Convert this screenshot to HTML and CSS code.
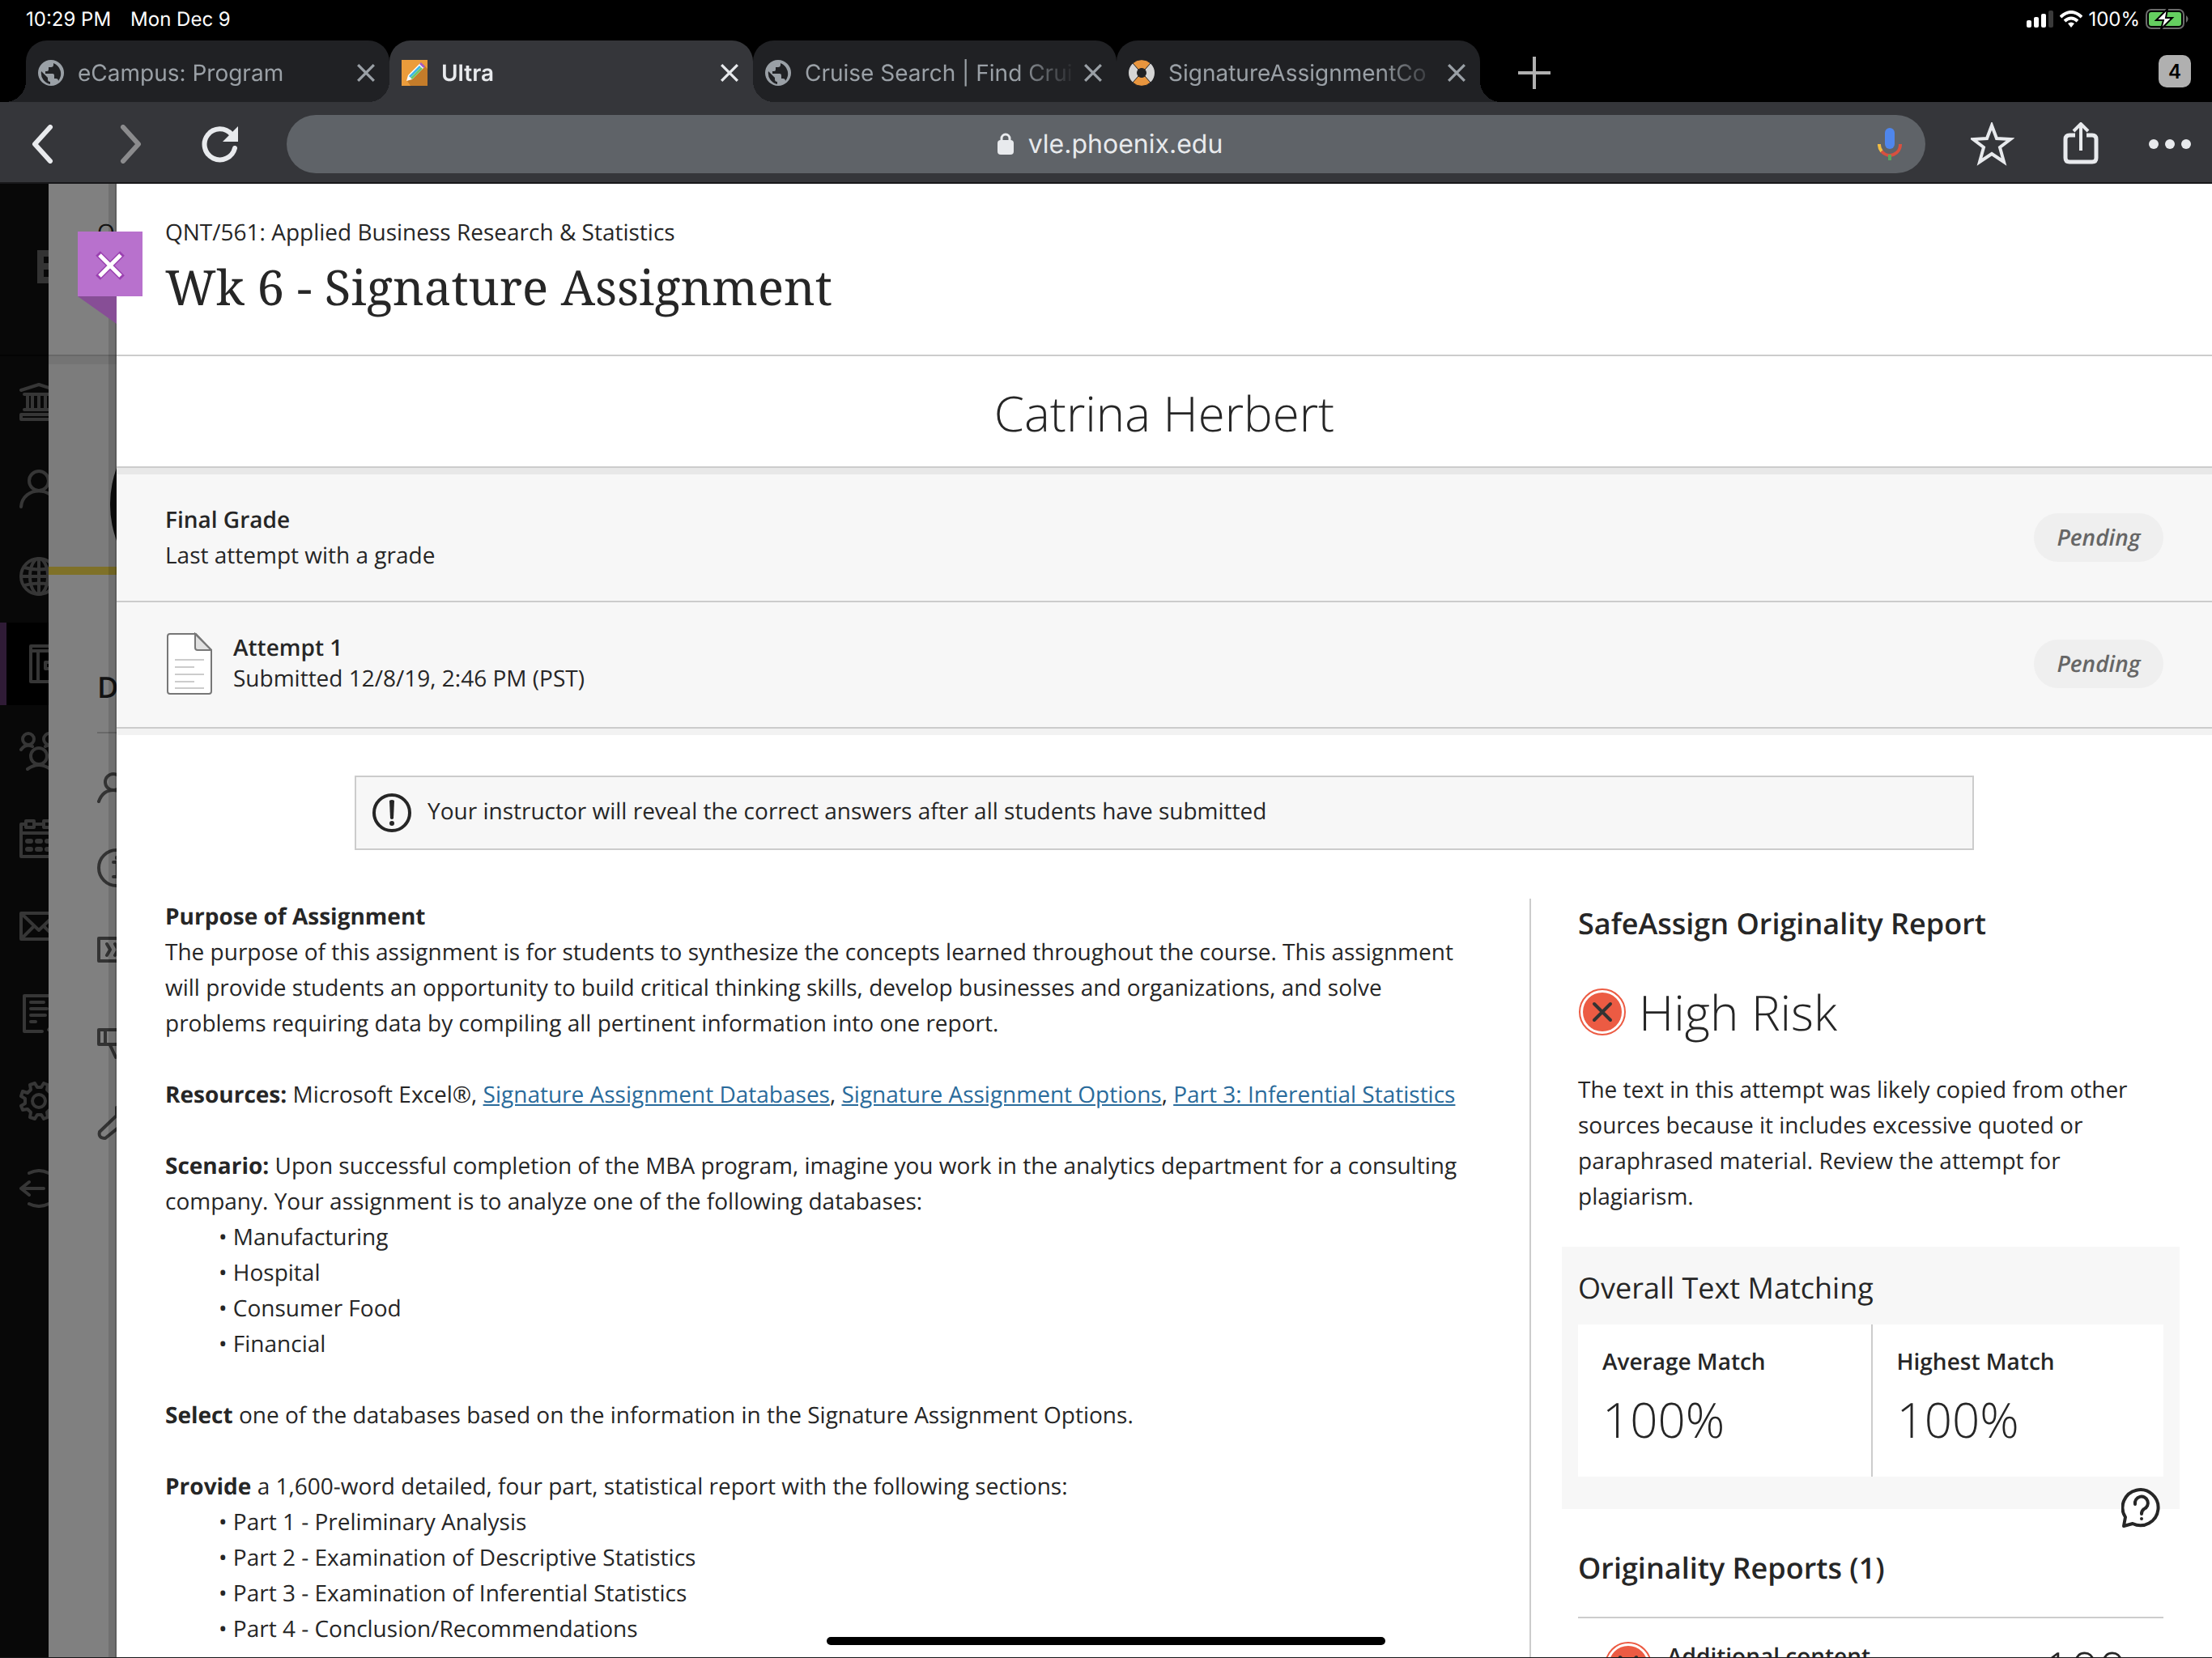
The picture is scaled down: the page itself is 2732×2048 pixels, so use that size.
FILE: index.html
```
<!DOCTYPE html>
<html lang="en">

<head>
    <meta charset="UTF-8">
    <meta name="viewport" content="width=device-width, initial-scale=1.0">
    <title>Ultra</title>
    <link rel="stylesheet" href="styles.css">
</head>

<body>
    <!-- shared shapes -->
    <svg class="defs" aria-hidden="true">
        <symbol id="globe" viewBox="0 0 32 32">
            <circle cx="16" cy="16" r="16" fill="#9aa0a6"/>
            <path d="M4 14 L12 22 V24 A3 3 0 0 0 15 27 V30 A14 14 0 0 1 4 14 Z M19 4 V6 A3 3 0 0 1 16 9 H13 V12 A2 2 0 0 1 11 14 H9 V17 H18 A2 2 0 0 1 20 19 V23 H22 A3 3 0 0 1 25 26 A14 14 0 0 0 19 4 Z" fill="#202124"/>
        </symbol>
        <symbol id="cross" viewBox="0 0 22 22">
            <path d="M2 2 L20 20 M20 2 L2 20" fill="none" stroke="currentColor" stroke-width="3"/>
        </symbol>
        <symbol id="risk" viewBox="0 0 60 60">
            <circle cx="30" cy="30" r="28" fill="#fff" stroke="#ec5b43" stroke-width="2"/>
            <circle cx="30" cy="30" r="24" fill="#ec5b43"/>
            <path d="M20 20 L40 40 M40 20 L20 40" stroke="#333" stroke-width="4" stroke-linecap="round"/>
        </symbol>
    </svg>

    <header class="browser">
        <div class="status">
            <span>10:29 PM</span>
            <span>Mon Dec 9</span>
            <div class="status-right">
                <svg width="34" height="22" viewBox="0 0 34 22" fill="#fff">
                    <rect x="0" y="12" width="6" height="9" rx="2"/>
                    <rect x="9" y="8" width="6" height="13" rx="2"/>
                    <rect x="18" y="4" width="6" height="17" rx="2"/>
                    <rect x="27" y="0" width="6" height="21" rx="2" fill="#3a3a3a"/>
                </svg>
                <svg width="28" height="22" viewBox="0 0 28 22" fill="none" stroke="#fff" stroke-width="4">
                    <path d="M1 8 Q14 -4 27 8"/>
                    <path d="M6 13 Q14 6 22 13"/>
                    <path d="M10 16 Q14 13 18 16 L14 21 Z" fill="#fff" stroke="none"/>
                </svg>
                <span>100%</span>
                <svg class="battery" width="54" height="26" viewBox="0 0 54 26">
                    <rect x="1" y="1" width="46" height="23" rx="6" fill="none" stroke="#6b6b6b" stroke-width="2"/>
                    <rect x="4" y="4" width="40" height="17" rx="3" fill="#65cf60"/>
                    <path d="M50 8 Q55 12 50 17 Z" fill="#6b6b6b"/>
                    <path d="M27 0 L13 14 H22 L19 25 L33 11 H25 Z" fill="#fff" stroke="#000" stroke-width="2"/>
                </svg>
            </div>
        </div>

        <div class="tabs">
            <div class="tab tab-first">
                <svg class="tab-icon"><use href="#globe"/></svg>
                <span class="tab-title">eCampus: Program</span>
                <button class="tab-close" type="button" aria-label="Close tab"><svg><use href="#cross"/></svg></button>
            </div>
            <div class="tab tab-active">
                <svg class="tab-icon" viewBox="0 0 32 32">
                    <rect width="32" height="32" fill="#eb9c3b"/>
                    <path d="M26 5 L32 11 V32 H11 L7 26 Z" fill="#c47c2a"/>
                    <path d="M6 26 L8 19 L23 4 L28 9 L13 24 Z" fill="#fff"/>
                    <path d="M9 20 L22 7 L24 9 L11 22 Z" fill="#3fb6e8"/>
                    <path d="M11 22 L24 9 L26 11 L13 24 Z" fill="#6cc56a"/>
                    <path d="M22 5 L24 3 L29 8 L27 10 Z" fill="#a25bc4"/>
                </svg>
                <span class="tab-title">Ultra</span>
                <button class="tab-close" type="button" aria-label="Close tab"><svg><use href="#cross"/></svg></button>
            </div>
            <div class="tab">
                <svg class="tab-icon"><use href="#globe"/></svg>
                <span class="tab-title">Cruise Search | Find Crui</span>
                <button class="tab-close" type="button" aria-label="Close tab"><svg><use href="#cross"/></svg></button>
            </div>
            <div class="tab tab-last">
                <svg class="tab-icon" viewBox="0 0 32 32">
                    <circle cx="16" cy="16" r="11" fill="none" stroke="#d5d5d5" stroke-width="10"/>
                    <path d="M5 4 A16 16 0 0 1 27 4 L20 12 A6 6 0 0 0 12 12 Z M5 28 A16 16 0 0 0 27 28 L20 20 A6 6 0 0 1 12 20 Z" fill="#e8953e" stroke="#202124" stroke-width="1"/>
                </svg>
                <span class="tab-title">SignatureAssignmentCo</span>
                <button class="tab-close" type="button" aria-label="Close tab"><svg><use href="#cross"/></svg></button>
            </div>
            <button class="new-tab" type="button" aria-label="New tab">
                <svg width="42" height="42" viewBox="0 0 42 42"><path d="M21 1 V41 M1 21 H41" stroke="#b0b0b0" stroke-width="4"/></svg>
            </button>
            <button class="tab-count" type="button">4</button>
        </div>

        <div class="toolbar">
            <button type="button" aria-label="Back">
                <svg width="28" height="48" viewBox="0 0 28 48"><path d="M24 3 L5 24 L24 45" fill="none" stroke="#e8eaed" stroke-width="6" stroke-linecap="round" stroke-linejoin="round"/></svg>
            </button>
            <button class="forward" type="button" aria-label="Forward">
                <svg width="28" height="48" viewBox="0 0 28 48"><path d="M4 3 L23 24 L4 45" fill="none" stroke="#8b8b8d" stroke-width="6" stroke-linecap="round" stroke-linejoin="round"/></svg>
            </button>
            <button class="reload" type="button" aria-label="Reload">
                <svg width="46" height="46" viewBox="0 0 46 46"><path d="M41 28 A19 19 0 1 1 37 11" fill="none" stroke="#e8eaed" stroke-width="6" stroke-linecap="round"/><path d="M45 1 V20 H26 Z" fill="#e8eaed"/></svg>
            </button>
            <div class="omnibox">
                <svg width="20" height="28" viewBox="0 0 20 28"><rect x="0" y="9" width="20" height="18" rx="4" fill="#e8eaed"/><path d="M5 10 V7 A5 5 0 0 1 15 7 V10" fill="none" stroke="#e8eaed" stroke-width="3"/></svg>
                <span>vle.phoenix.edu</span>
                <svg class="mic" width="30" height="42" viewBox="0 0 30 42">
                    <rect x="9" y="1" width="12" height="26" rx="6" fill="#4f86ec"/>
                    <path d="M2 21 A13 13 0 0 0 5 30" fill="none" stroke="#f2bd42" stroke-width="4"/>
                    <path d="M5 30 A13 13 0 0 0 28 21" fill="none" stroke="#d8503f" stroke-width="4"/>
                    <path d="M15 34 V41" stroke="#58a55c" stroke-width="4"/>
                </svg>
            </div>
            <button class="star" type="button" aria-label="Bookmark">
                <svg width="54" height="54" viewBox="0 0 54 54"><path d="M26 4 L32 20 L49 21 L36 31 L41 49 L26 39 L11 49 L16 31 L3 21 L20 20 Z" fill="none" stroke="#e8eaed" stroke-width="4"/></svg>
            </button>
            <button class="share" type="button" aria-label="Share">
                <svg width="44" height="54" viewBox="0 0 44 54" fill="none" stroke="#e8eaed"><path d="M15 16 H8 Q3 16 3 21 V44 Q3 49 8 49 H36 Q41 49 41 44 V21 Q41 16 36 16 H29" stroke-width="5"/><path d="M22 35 V3 M13 11 L22 2 L31 11" stroke-width="4"/></svg>
            </button>
            <button class="more" type="button" aria-label="More">
                <svg width="52" height="12" viewBox="0 0 52 12" fill="#e8eaed"><circle cx="6" cy="6" r="6"/><circle cx="26" cy="6" r="6"/><circle cx="46" cy="6" r="6"/></svg>
            </button>
        </div>
    </header>

    <div class="page">
        <!-- main navigation, dimmed under the open panel -->
        <nav class="side-nav">
            <div class="logo">
                <svg width="60" height="211" viewBox="0 0 60 211"><path d="M46 82 H70 V123 H46 Z M54 90 V98 H70 V90 Z M54 106 V115 H70 V106 Z" fill="#333" fill-rule="evenodd"/></svg>
            </div>
            <ul>
                <li><a href="#" aria-label="Institution"><svg viewBox="0 0 48 48"><path d="M2 10 L24 3 L46 10 M6 15 H42 M10 17 V34 M16 17 V34 M24 17 V34 M32 17 V34 M38 17 V34 M6 34 H42 M2 46 V40 H46 V46 Z"/></svg></a></li>
                <li><a href="#" aria-label="Profile"><svg viewBox="0 0 48 48"><circle cx="24" cy="14" r="12"/><path d="M2 46 C4 20 44 20 46 46"/></svg></a></li>
                <li><a href="#" aria-label="Activity"><svg viewBox="0 0 48 48"><circle cx="24" cy="24" r="22"/><ellipse cx="24" cy="24" rx="11" ry="22"/><path d="M24 2 V46 M2 24 H46 M6 13 Q24 18 42 13 M6 35 Q24 30 42 35"/></svg></a></li>
                <li class="active"><a href="#" aria-label="Courses"><svg viewBox="0 0 48 48"><path d="M14 2 H48 M14 46 H48 M14 2 V46 M23 8 V46 M14 8 H48 M48 22 H32 V30 H48"/></svg></a></li>
                <li><a href="#" aria-label="Organizations"><svg viewBox="0 0 48 48"><circle cx="11" cy="9" r="7"/><circle cx="37" cy="9" r="7"/><circle cx="24" cy="30" r="10"/><path d="M2 22 Q8 14 16 18 M46 22 Q40 14 32 18 M10 46 Q24 36 38 46"/></svg></a></li>
                <li><a href="#" aria-label="Calendar"><svg viewBox="0 0 48 48"><path d="M8 6 H2 V46 H46 V6 H40 M18 6 H30 M2 17 H46 M8 2 H18 V10 H8 Z M30 2 H40 V10 H30 Z"/><path d="M10 27 H14 M22 27 H26 M34 27 H38 M10 37 H14 M22 37 H26 M34 37 H38" stroke-width="6"/></svg></a></li>
                <li><a href="#" aria-label="Messages"><svg viewBox="0 0 48 48"><path d="M2 8 H46 V40 H2 Z M3 9 L24 29 L45 9 M3 39 L18 24 M45 39 L30 24"/></svg></a></li>
                <li><a href="#" aria-label="Grades"><svg viewBox="0 0 48 48"><path d="M28 46 H6 V2 H42 V24 M14 10 H30 M14 18 H34 M14 26 H32 M14 34 H20 M36 44 L46 32"/></svg></a></li>
                <li><a href="#" aria-label="Tools"><svg viewBox="0 0 48 48"><circle cx="24" cy="24" r="8"/><path d="M19 2 L22 7 H27 L30 2 L35 4 L34 10 L38 14 L44 12 L46 18 L41 21 V27 L46 30 L44 36 L38 34 L34 38 L35 44 L30 46 L27 41 H22 L19 46 L13 44 L14 38 L10 34 L4 35 L2 30 L7 27 V21 L2 18 L4 12 L10 14 L14 10 L13 4 Z"/></svg></a></li>
                <li><a href="#" aria-label="Sign Out"><svg viewBox="0 0 48 48"><path d="M12 5 Q24 -1 36 5 M12 43 Q24 49 36 43 M30 24 H2 M12 16 L2 24 L12 32"/></svg></a></li>
            </ul>
        </nav>

        <!-- course page behind the panel -->
        <aside class="course">
            <div class="course-head">Q</div>
            <div class="course-banner">
                <svg width="84" height="250" viewBox="0 0 84 250"><circle cx="207" cy="173" r="131" fill="#0c0c0c"/></svg>
            </div>
            <h2>D</h2>
            <ul>
                <li><svg viewBox="0 0 48 48"><circle cx="20" cy="18" r="10"/><path d="M2 42 Q7 28 20 28 Q33 28 38 42"/></svg></li>
                <li><svg viewBox="0 0 48 48"><circle cx="24" cy="20" r="22"/><path d="M20 13 H25 V31 M20 31 H30 M24 7 V8"/></svg></li>
                <li><svg viewBox="0 0 48 48"><path d="M2 3 H46 V31 H2 Z M12 10 L16 17 L12 24 M22 10 L26 17 L22 24"/></svg></li>
                <li><svg viewBox="0 0 48 48"><path d="M2 12 H24 L46 5 V37 L24 30 H2 Z M10 12 V30 M16 31 L23 46"/></svg></li>
                <li><svg viewBox="0 0 48 48"><path d="M24 14 L3 34 Q1 42 10 42 L32 24 M24 14 V4"/></svg></li>
            </ul>
        </aside>

        <main class="panel">
            <button class="close-panel" type="button" aria-label="Close">
                <svg width="36" height="36" viewBox="0 0 36 36"><path d="M3 3 L33 33 M33 3 L3 33" stroke="#9a40b0" stroke-width="8"/><path d="M5 5 L31 31 M31 5 L5 31" stroke="#fff" stroke-width="5"/></svg>
            </button>
            <div class="panel-head">
                <p>QNT/561: Applied Business Research &amp; Statistics</p>
                <h1>Wk 6 - Signature Assignment</h1>
            </div>
            <div class="student">Catrina Herbert</div>

            <section class="grades">
                <div class="grade-row">
                    <div>
                        <h3>Final Grade</h3>
                        <p>Last attempt with a grade</p>
                    </div>
                    <span class="pill">Pending</span>
                </div>
                <div class="grade-row attempt">
                    <svg width="58" height="78" viewBox="0 0 58 78">
                        <path d="M3 5 Q3 2 6 2 H38 L57 22 V73 Q57 76 54 76 H6 Q3 76 3 73 Z" fill="#fff" stroke="#777" stroke-width="2"/>
                        <path d="M37 2 V19 Q37 22 40 22 H57 Z" fill="#e1e1e1" stroke="#777" stroke-width="2"/>
                        <path d="M12 34 H48 M12 43 H36 M12 52 H48 M12 61 H36 M12 69 H48" stroke="#ccc" stroke-width="2"/>
                    </svg>
                    <div>
                        <h3>Attempt 1</h3>
                        <p>Submitted 12/8/19, 2:46 PM (PST)</p>
                    </div>
                    <span class="pill">Pending</span>
                </div>
            </section>

            <div class="notice">
                <svg width="50" height="50" viewBox="0 0 50 50"><circle cx="24" cy="25" r="22" fill="none" stroke="#262626" stroke-width="4"/><path d="M21 10 Q24 8 27 10 L26 32 Q24 34 22 32 Z" fill="#262626"/><circle cx="24" cy="38" r="3" fill="#262626"/></svg>
                <span>Your instructor will reveal the correct answers after all students have submitted</span>
            </div>

            <div class="columns">
                <article class="assignment">
                    <p><b>Purpose of Assignment</b><br>
                        The purpose of this assignment is for students to synthesize the concepts learned throughout the course. This assignment will provide students an opportunity to build critical thinking skills, develop businesses and organizations, and solve problems requiring data by compiling all pertinent information into one report.</p>
                    <p><b>Resources:</b> Microsoft Excel®, <a href="#">Signature Assignment Databases</a>, <a href="#">Signature Assignment Options</a>, <a href="#">Part 3: Inferential Statistics</a></p>
                    <div class="block">
                        <b>Scenario:</b> Upon successful completion of the MBA program, imagine you work in the analytics department for a consulting company. Your assignment is to analyze one of the following databases:
                        <ul>
                            <li>Manufacturing</li>
                            <li>Hospital</li>
                            <li>Consumer Food</li>
                            <li>Financial</li>
                        </ul>
                    </div>
                    <p><b>Select</b> one of the databases based on the information in the Signature Assignment Options.</p>
                    <div class="block">
                        <b>Provide</b> a 1,600-word detailed, four part, statistical report with the following sections:
                        <ul>
                            <li>Part 1 - Preliminary Analysis</li>
                            <li>Part 2 - Examination of Descriptive Statistics</li>
                            <li>Part 3 - Examination of Inferential Statistics</li>
                            <li>Part 4 - Conclusion/Recommendations</li>
                        </ul>
                    </div>
                </article>

                <aside class="report">
                    <h2>SafeAssign Originality Report</h2>
                    <div class="risk">
                        <svg width="60" height="60"><use href="#risk"/></svg>
                        <span>High Risk</span>
                    </div>
                    <p>The text in this attempt was likely copied from other sources because it includes excessive quoted or paraphrased material. Review the attempt for plagiarism.</p>
                    <div class="matching">
                        <h2>Overall Text Matching</h2>
                        <div class="scores">
                            <div>
                                <h3>Average Match</h3>
                                <span>100%</span>
                            </div>
                            <div>
                                <h3>Highest Match</h3>
                                <span>100%</span>
                            </div>
                        </div>
                        <button class="help" type="button" aria-label="Help">
                            <svg width="50" height="50" viewBox="0 0 50 50"><path d="M5 36 A22 22 0 1 1 14 44 L3 47 Z" fill="#fff" stroke="#262626" stroke-width="4" stroke-linejoin="round"/><path d="M17 20 A8 8 0 1 1 28 26 Q25 28 25 32" fill="none" stroke="#262626" stroke-width="4" stroke-linecap="round"/><circle cx="25" cy="38" r="2" fill="#262626"/></svg>
                        </button>
                    </div>
                    <h2>Originality Reports (1)</h2>
                    <div class="report-row">
                        <svg width="60" height="60"><use href="#risk"/></svg>
                        <h3>Additional content</h3>
                        <span>100</span>
                    </div>
                </aside>
            </div>
        </main>
        <div class="home-bar"></div>
    </div>
</body>
</html>
```
FILE: styles.css
```
* {
    padding: 0;
    margin: 0;
    box-sizing: border-box;
}
body {
    height: 100vh;
    display: flex;
    flex-direction: column;
    overflow: hidden;
    background: #000;
    color: #262626;
    font-family: "Open Sans", "Noto Sans", sans-serif;
    font-size: 28px;
    line-height: 44px;
    text-rendering: geometricPrecision;
}
button {
    border: none;
    background: none;
    color: inherit;
    display: flex;
    align-items: center;
    justify-content: center;
    flex: none;
}
svg {
    display: block;
    flex: none;
}
ul {
    list-style: none;
}
.defs {
    position: absolute;
    width: 0;
    height: 0;
}

/* browser chrome */
.browser {
    flex: none;
    font-family: Inter, Roboto, sans-serif;
    color: #fff;
}
.status {
    height: 50px;
    padding: 0 28px 2px 32px;
    display: flex;
    align-items: center;
    gap: 24px;
    font-size: 24px;
    line-height: 28px;
}
.status-right {
    margin-left: auto;
    display: flex;
    align-items: center;
    gap: 7px;
}
.tabs {
    height: 76px;
    padding-left: 32px;
    display: flex;
    align-items: center;
}
.tab {
    position: relative;
    width: 449px;
    height: 76px;
    padding: 3px 17px 0 15px;
    display: flex;
    align-items: center;
    border-radius: 26px 26px 0 0;
    background: #202124;
    color: #9aa0a6;
    font-size: 28px;
}
.tab-active {
    background: #35363a;
    color: #e8eaed;
    font-weight: 600;
}
/* flared feet of the outer and the active tabs */
.tab-first::before,
.tab-active::before,
.tab-active::after,
.tab-last::after {
    content: "";
    position: absolute;
    bottom: 0;
    width: 26px;
    height: 26px;
}
.tab-first::before,
.tab-active::before {
    right: 100%;
    background: radial-gradient(circle at 0 0, transparent 26px, #202124 26px);
}
.tab-active::after,
.tab-last::after {
    left: 100%;
    background: radial-gradient(circle at 100% 0, transparent 26px, #202124 26px);
}
.tab-active::before {
    background: radial-gradient(circle at 0 0, transparent 26px, #35363a 26px);
}
.tab-active::after {
    z-index: 1;
    background: radial-gradient(circle at 100% 0, transparent 26px, #35363a 26px);
}
.tab-icon {
    width: 32px;
    height: 32px;
    margin-right: 17px;
}
.tab-title {
    flex: 1;
    overflow: hidden;
    white-space: nowrap;
    margin-right: 8px;
    -webkit-mask-image: linear-gradient(to right, #000 78%, transparent);
    mask-image: linear-gradient(to right, #000 78%, transparent);
}
.tab-close svg {
    width: 24px;
    height: 24px;
}
.new-tab {
    margin: 3px 0 0 46px;
}
.tab-count {
    margin-left: auto;
    margin-right: 26px;
    width: 40px;
    height: 40px;
    border-radius: 10px;
    background: #b0b0b0;
    color: #000;
    font: 600 24px Inter, sans-serif;
}
.toolbar {
    height: 101px;
    padding: 4px 26px 0 38px;
    display: flex;
    align-items: center;
    background: #35363a;
    border-bottom: 2px solid #18181a;
}
.forward {
    margin-left: 82px;
}
.reload {
    margin-left: 73px;
}
.omnibox {
    position: relative;
    flex: 1;
    height: 72px;
    margin: 0 56px 0 59px;
    padding-left: 10px;
    display: flex;
    align-items: center;
    justify-content: center;
    gap: 18px;
    border-radius: 36px;
    background: #5f6368;
    color: #e8eaed;
    font-size: 32px;
}
.mic {
    position: absolute;
    right: 29px;
}
.share {
    margin-left: 60px;
}
.more {
    margin-left: 62px;
}

/* page */
.page {
    position: relative;
    flex: 1;
    min-height: 0;
    overflow: hidden;
    display: grid;
    grid-template-columns: 60px 84px 1fr;
    border-bottom: 1px solid #18181a;
}
.side-nav {
    overflow: hidden;
    background: #080808;
}
.logo {
    height: 213px;
    border-bottom: 2px solid #030303;
}
.side-nav ul {
    display: grid;
    gap: 6px;
    padding-top: 5px;
}
.side-nav li {
    height: 102px;
    padding-left: 24px;
    display: flex;
    align-items: center;
}
.side-nav li.active {
    padding-left: 16px;
    border-left: 8px solid #2f1b36;
    background: #000;
}
.side-nav li svg {
    width: 48px;
    height: 48px;
    fill: none;
    stroke: #363636;
    stroke-width: 4;
    stroke-linecap: round;
    stroke-linejoin: round;
}
.course {
    overflow: hidden;
    background: #808080;
    color: #131313;
}
.course-head {
    height: 213px;
    padding: 38px 0 0 60px;
    border-bottom: 2px solid #686868;
}
.course-banner {
    height: 270px;
    border-top: 10px solid #747474;
    border-bottom: 10px solid #7f7128;
    background: #7c7c7c;
}
.course h2 {
    height: 196px;
    padding: 114px 0 0;
    margin-left: 60px;
    border-bottom: 2px solid #696969;
    font-size: 36px;
    font-weight: 600;
    line-height: 50px;
}
.course ul {
    padding: 42px 0 0 60px;
    display: grid;
    gap: 56px;
}
.course li svg {
    width: 48px;
    height: 48px;
    overflow: visible;
    fill: none;
    stroke: #333;
    stroke-width: 4;
    stroke-linecap: round;
    stroke-linejoin: round;
}

/* sliding panel */
.panel {
    position: relative;
    min-width: 0;
    background: #fff;
    box-shadow: -2px 0 0 rgba(0, 0, 0, 0.15), -10px 0 0 rgba(0, 0, 0, 0.12);
}
.close-panel {
    position: absolute;
    left: -48px;
    top: 59px;
    width: 80px;
    height: 80px;
    padding-top: 4px;
    background: #b871cd;
}
.close-panel::after {
    content: "";
    position: absolute;
    left: 0;
    top: 100%;
    width: 48px;
    height: 34px;
    background: #874e96;
    clip-path: polygon(0 0, 100% 0, 100% 100%);
}
.panel-head {
    height: 213px;
    padding: 38px 60px 0;
    border-bottom: 2px solid #ccc;
}
h1 {
    font-family: "Noto Serif", "Droid Serif", "DejaVu Serif", serif;
    font-size: 60px;
    font-weight: 400;
    line-height: 90px;
}
h2 {
    font-size: 36px;
    font-weight: 600;
    line-height: 50px;
}
h3 {
    font-size: 28px;
    font-weight: 600;
}
.student {
    height: 136px;
    text-align: center;
    font-size: 60px;
    font-weight: 300;
    line-height: 140px;
}
.grades {
    border-top: 2px solid #ccc;
    border-bottom: 8px solid #f2f2f2;
    background: #f7f7f7;
}
.grade-row {
    height: 166px;
    padding: 0 60px;
    display: flex;
    align-items: center;
    border-top: 8px solid #e8e8e8;
    border-bottom: 2px solid #ccc;
}
.grade-row.attempt {
    height: 156px;
    padding-bottom: 3px;
    border-top: none;
    line-height: 38px;
}
.attempt svg {
    margin-right: 26px;
}
.attempt div {
    padding-bottom: 2px;
}
.pill {
    margin-left: auto;
    width: 160px;
    border-radius: 30px;
    background: #efefef;
    color: #666;
    font-style: italic;
    font-weight: 600;
    line-height: 60px;
    text-align: center;
}
.notice {
    max-width: 2000px;
    height: 92px;
    margin: 50px auto 60px;
    padding: 0 20px;
    display: flex;
    align-items: center;
    gap: 18px;
    border: 2px solid #ccc;
    background: #f7f7f7;
}
.notice span {
    padding-bottom: 4px;
}
.columns {
    padding: 0 60px;
    display: grid;
    grid-template-columns: 1fr 783px;
}
.assignment {
    padding-right: 60px;
}
.assignment p,
.assignment .block {
    margin-bottom: 44px;
}
.assignment a {
    color: #2a6b9b;
}
.assignment li {
    margin-left: 66px;
}
.assignment li::before {
    content: "• ";
}
.report {
    padding: 6px 0 0 58px;
    border-left: 2px solid #ccc;
}
.risk {
    margin: 48px 0 38px;
    display: flex;
    align-items: center;
    gap: 15px;
    font-size: 60px;
    font-weight: 300;
    line-height: 72px;
}
.matching {
    position: relative;
    margin: 40px -20px 48px;
    padding: 26px 20px 40px;
    background: #f7f7f7;
}
.matching h2 {
    font-weight: 400;
}
.scores {
    margin-top: 20px;
    display: grid;
    grid-template-columns: 1fr 1fr;
    background: #fff;
}
.scores div {
    height: 188px;
    padding: 24px 30px;
}
.scores div + div {
    border-left: 2px solid #ccc;
}
.scores span {
    font-size: 60px;
    font-weight: 300;
    line-height: 98px;
}
.help {
    position: absolute;
    right: 22px;
    bottom: -24px;
}
.report-row {
    margin-top: 35px;
    padding: 28px 46px 0 32px;
    display: flex;
    gap: 18px;
    border-top: 2px solid #ccc;
}
.report-row h3 {
    line-height: 38px;
}
.report-row span {
    margin-left: auto;
    font-size: 60px;
    font-weight: 300;
    line-height: 68px;
}
.home-bar {
    position: absolute;
    left: 50%;
    bottom: 15px;
    width: 690px;
    height: 10px;
    margin-left: -345px;
    border-radius: 5px;
    background: #000;
}
```
